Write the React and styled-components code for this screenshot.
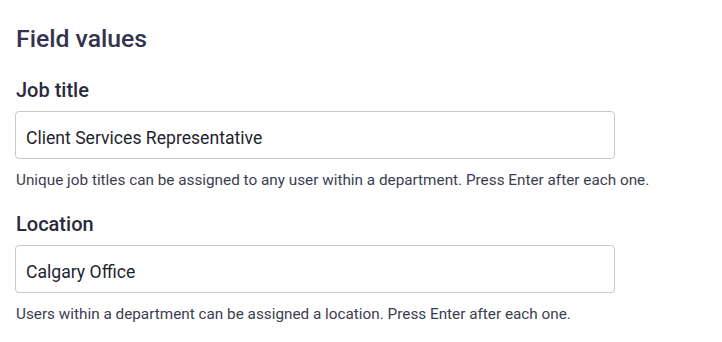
import React from "react";
import styled, { createGlobalStyle } from "styled-components";

const GlobalStyle = createGlobalStyle`
    body {
        margin: 0;
        background: #ffffff;
        font-family: Roboto, "Liberation Sans", sans-serif;
    }
`;

const Wrapper = styled.div`
    padding: 24px 16px 0 16px;
    color: #2e2e45;
`;

const Heading = styled.h2`
    margin: 0 0 24px 0;
    font-size: 24.75px;
    line-height: 30px;
    font-weight: 500;
    color: #33334d;
`;

const Field = styled.div`
    display: flex;
    flex-direction: column;
    margin-bottom: 22px;
`;

const Label = styled.label`
    font-size: 20px;
    line-height: 24px;
    font-weight: 500;
    color: #2a2a3d;
    margin-bottom: 9px;
`;

const Input = styled.input`
    box-sizing: border-box;
    width: 600px;
    height: 48px;
    margin-left: -1px;
    padding: 5px 10px 0 10px;
    border: 1px solid #c8c8cc;
    border-radius: 4px;
    font-family: Roboto, "Liberation Sans", sans-serif;
    font-size: 17.6px;
    color: #1f1f2e;
    outline: none;
`;

const Help = styled.div`
    margin-top: 11px;
    font-size: 15.3px;
    line-height: 20px;
    color: #3d3d52;
`;

function App() {
    return (
        <Wrapper>
            <GlobalStyle />
            <Heading>Field values</Heading>
            <Field>
                <Label>Job title</Label>
                <Input defaultValue="Client Services Representative" />
                <Help>Unique job titles can be assigned to any user within a department. Press Enter after each one.</Help>
            </Field>
            <Field>
                <Label>Location</Label>
                <Input defaultValue="Calgary Office" />
                <Help>Users within a department can be assigned a location. Press Enter after each one.</Help>
            </Field>
        </Wrapper>
    );
}

export default App;
